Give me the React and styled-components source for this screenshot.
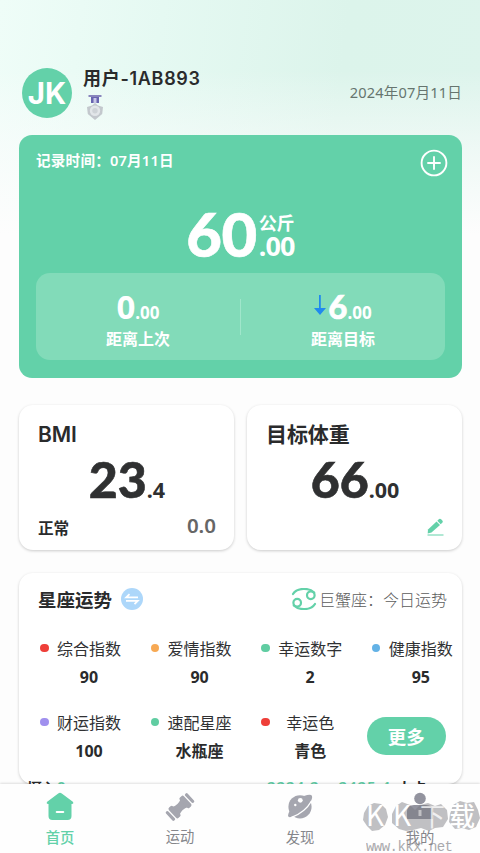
import React from "react";
import styled, { createGlobalStyle } from "styled-components";

const GREEN = "#63d1a9";
const cjk = `"Noto Sans CJK SC", sans-serif`;

const GlobalStyle = createGlobalStyle`
  * { box-sizing: border-box; }
  body { margin: 0; background: #fdfdfd; font-family: "Noto Sans CJK SC", sans-serif; color: #2a2b2c; }
`;

const Phone = styled.div`
  width: 480px;
  height: 853px;
  overflow: hidden;
  position: relative;
  display: flex;
  flex-direction: column;
  background:
    linear-gradient(180deg, rgba(253,253,253,0) 0, rgba(253,253,253,0) 70px, rgba(253,253,253,0.55) 150px, #fdfdfd 235px),
    linear-gradient(97deg, #effdf8 0%, #e5f9f2 28%, #dcf4eb 60%, #ddf4ec 86%, #e6f7f1 100%);
`;

const Content = styled.main`
  height: 784px;
  flex: none;
  overflow: hidden;
  padding: 67px 18px 0 19px;
`;

const Header = styled.header`
  display: flex;
  height: 68px;
  padding-left: 3px;
`;

const Avatar = styled.div`
  width: 50px;
  height: 50px;
  margin-top: 0.5px;
  border-radius: 50%;
  background: ${GREEN};
  color: #fff;
  font: 700 29.5px/51px Inter, sans-serif;
  text-align: center;
`;

const Identity = styled.div`
  flex: 1;
  margin-left: 11px;
`;

const UserName = styled.div`
  font: 600 18px/23px Inter, ${cjk};
  letter-spacing: 0.7px;
  white-space: nowrap;
`;

const Medal = styled.svg`
  display: block;
  width: 18px;
  height: 25px;
  margin: 5px 0 0 3px;
`;

const Today = styled.div`
  font: 400 14.6px/20px "Noto Sans", ${cjk};
  letter-spacing: 0.15px;
  margin-top: 15px;
  color: #66756f;
`;

const WeightCard = styled.section`
  height: 243px;
  border-radius: 13px;
  background: ${GREEN};
  color: #fff;
  padding: 0 17px;
  display: flex;
  flex-direction: column;
`;

const RecordRow = styled.div`
  display: flex;
  justify-content: space-between;
  height: 68px;
`;

const RecordTime = styled.div`
  font: 600 14.6px/20px "Noto Sans", ${cjk};
  letter-spacing: 0.2px;
  margin-top: 15px;
`;

const AddIcon = styled.svg`
  width: 28px;
  height: 28px;
  margin: 14px -3px 0 0;
`;

const Weight = styled.div`
  display: flex;
  justify-content: center;
  height: 70px;
  gap: 2px;
`;

const Digits = styled.span`
  font-family: ${(p) => (p.$heavy ? `"Lato"` : `"Noto Sans"`)}, sans-serif;
  font-weight: ${(p) => (p.$heavy ? 900 : 700)};
  font-size: ${(p) => p.$size}px;
  line-height: ${(p) => p.$line || p.$size}px;
  letter-spacing: ${(p) => p.$track || 0}px;
  -webkit-text-stroke: ${(p) => (p.$heavy ? 0.6 : 0)}px currentColor;
`;

const UnitStack = styled.div`
  display: flex;
  flex-direction: column;
  padding-top: 8px;
`;

const Unit = styled.span`
  font: 600 18px/23px ${cjk};
`;

const Panel = styled.div`
  height: 87px;
  border-radius: 14px;
  background: #82dbb9;
  display: grid;
  grid-template-columns: 1fr 1px 1fr;
  align-items: center;
`;

const PanelDivider = styled.i`
  height: 36px;
  background: #a0e6cb;
`;

const Distance = styled.div`
  height: 87px;
  padding-top: 17px;
  text-align: center;
`;

const DistanceValue = styled.div`
  display: flex;
  justify-content: center;
  align-items: baseline;
  height: 37px;
`;

const DownArrow = styled.svg`
  width: 12px;
  height: 21px;
  margin-right: 2px;
  align-self: flex-start;
  margin-top: 5px;
`;

const DistanceLabel = styled.div`
  font: 600 16px/22px ${cjk};
`;

const CardRow = styled.div`
  display: grid;
  grid-template-columns: 1fr 1fr;
  gap: 13px;
  margin-top: 27px;
`;

const Card = styled.section`
  background: #fff;
  border-radius: 14px;
  box-shadow: 0 1px 3px rgba(0, 0, 0, 0.2);
`;

const StatCard = styled(Card)`
  height: 145px;
  padding: 17px 18px 0 19px;
`;

const StatTitle = styled.div`
  font: 600 21px/25px Inter, ${cjk};
  letter-spacing: -0.1px;
  height: 32px;
`;

const StatValue = styled.div`
  height: 61px;
  display: flex;
  justify-content: center;
  align-items: baseline;
  color: #2f3031;
`;

const StatFoot = styled.div`
  display: flex;
  justify-content: ${(p) => (p.$end ? "flex-end" : "space-between")};
`;

const Status = styled.span`
  font: 600 15.6px/25px ${cjk};
`;

const Delta = styled.span`
  font: 600 20.5px/21px "Noto Sans", sans-serif;
  color: #666;
`;

const EditIcon = styled.svg`
  width: 17px;
  height: 19px;
  margin-top: 3px;
`;

const FortuneCard = styled(Card)`
  height: 211px;
  margin-top: 23px;
  padding: 13px 0 0 19px;
`;

const FortuneHead = styled.div`
  display: flex;
  align-items: center;
  height: 28px;
  padding-right: 15px;
`;

const FortuneTitle = styled.div`
  font: 600 18.5px/26px ${cjk};
  flex: none;
  margin-top: -2px;
`;

const SwapIcon = styled.svg`
  width: 22px;
  height: 22px;
  margin: -2px auto 0 9px;
`;

const CancerIcon = styled.svg`
  width: 26px;
  height: 22px;
  margin: -3px 2px 0 0;
`;

const SignText = styled.span`
  font: 300 16px/26px ${cjk};
  color: #5c5c5c;
  margin-top: -2px;
`;

const FortuneGrid = styled.div`
  display: grid;
  grid-template-columns: repeat(4, 110.6px);
  grid-auto-rows: 74px;
  margin-top: 22px;
`;

const FortuneItem = styled.div`
  display: grid;
  grid-template-columns: 19px 64px;
  grid-template-rows: 24px 33px;
  align-items: center;
`;

const Dot = styled.i`
  width: 8.5px;
  height: 8.5px;
  margin-left: 2px;
  border-radius: 50%;
  background: ${(p) => p.$color};
`;

const FortuneLabel = styled.span`
  font: 400 16px/24px ${cjk};
  text-align: center;
  color: #303133;
`;

const FortuneValue = styled.span`
  grid-column: 2;
  text-align: center;
  font: 700 16px/24px "Noto Sans", ${cjk};
`;

const MoreButton = styled.button`
  border: 0;
  width: 79px;
  height: 38px;
  margin: 7px 0 0 -3px;
  border-radius: 19px;
  background: ${GREEN};
  color: #fff;
  padding: 0;
  font: 700 18.5px/36px ${cjk};
`;

const NextSection = styled.div`
  margin-top: -8px;
  padding-left: 8px;
  display: grid;
  grid-template-columns: 240px 1fr;
  font: 600 15px/20px "Noto Sans", ${cjk};
  white-space: nowrap;
  position: relative;
`;

const NextText = styled.span`
  display: flex;
  align-items: flex-start;
`;

const Accent = styled.span`
  color: ${GREEN};
  letter-spacing: 0.9px;
`;

const NextUnit = styled.span`
  padding: 2px 0 0 ${(p) => p.$gap || 0}px;
`;

const TabBar = styled.nav`
  height: 69px;
  flex: none;
  display: grid;
  grid-template-columns: repeat(4, 1fr);
  background: #fefefe;
  box-shadow: 0 -1px 2px rgba(0, 0, 0, 0.12);
  position: relative;
`;

const Tab = styled.div`
  display: flex;
  flex-direction: column;
  align-items: center;
  padding-top: 8px;
  color: ${(p) => (p.$active ? GREEN : "#85868b")};
  font: ${(p) => (p.$active ? 500 : 400)} 14.3px/20px ${cjk};
`;

const TabIcon = styled.svg`
  width: 30px;
  height: 30px;
  margin-bottom: ${(p) => p.$gap}px;
`;

const Watermark = styled.svg`
  position: absolute;
  right: 0;
  bottom: 0;
  width: 120px;
  height: 56px;
`;

const fortunes = [
  ["综合指数", "90", "#ee3f39"],
  ["爱情指数", "90", "#f7a954"],
  ["幸运数字", "2", "#60cda2"],
  ["健康指数", "95", "#63b2e6"],
  ["财运指数", "100", "#a090ee"],
  ["速配星座", "水瓶座", "#60cda2"],
  ["幸运色", "青色", "#ee3f39"],
];

export default function App() {
  return (
    <Phone>
      <GlobalStyle />
      <Content>
        <Header>
          <Avatar>JK</Avatar>
          <Identity>
            <UserName>用户-1AB893</UserName>
            <Medal viewBox="0 0 18 25">
              <path d="M2.5 0h13v2h-13z" fill="#8986bd" />
              <path d="M5 2h8v6H5z" fill="#6965b0" />
              <path d="M7.5 3h3v5h-3z" fill="#c9c8e8" />
              <path d="m9 8 3 2.5 5 1.5-.8 7L9 25l-7.2-6L1 12l5-1.5z" fill="#c3c8cd" />
              <circle cx="9" cy="15.8" r="5.2" fill="#e2e6e9" />
              <circle cx="9" cy="15.8" r="2.7" fill="#ced3d7" />
            </Medal>
          </Identity>
          <Today>2024年07月11日</Today>
        </Header>

        <WeightCard>
          <RecordRow>
            <RecordTime>记录时间：07月11日</RecordTime>
            <AddIcon viewBox="0 0 28 28" fill="none" stroke="#fff" strokeWidth="1.9">
              <circle cx="14" cy="14" r="12.4" />
              <path d="M14 7.3v13.4M7.3 14h13.4" />
            </AddIcon>
          </RecordRow>
          <Weight>
            <Digits $heavy $size={61.5} $line={61} $track={-0.5}>60</Digits>
            <UnitStack>
              <Unit>公斤</Unit>
              <Digits $size={27} $line={24} $track={-0.8}>.00</Digits>
            </UnitStack>
          </Weight>
          <Panel>
            <Distance>
              <DistanceValue>
                <Digits $size={33}>0</Digits>
                <Digits $size={17}>.00</Digits>
              </DistanceValue>
              <DistanceLabel>距离上次</DistanceLabel>
            </Distance>
            <PanelDivider />
            <Distance>
              <DistanceValue>
                <DownArrow viewBox="0 0 12 21">
                  <path d="M5 0h1.8v13H12l-6 7-6-7h5z" fill="#2089ee" />
                </DownArrow>
                <Digits $heavy $size={33}>6</Digits>
                <Digits $size={17}>.00</Digits>
              </DistanceValue>
              <DistanceLabel>距离目标</DistanceLabel>
            </Distance>
          </Panel>
        </WeightCard>

        <CardRow>
          <StatCard>
            <StatTitle>BMI</StatTitle>
            <StatValue>
              <Digits $heavy $size={50}>23</Digits>
              <Digits $size={21.5}>.4</Digits>
            </StatValue>
            <StatFoot>
              <Status>正常</Status>
              <Delta>0.0</Delta>
            </StatFoot>
          </StatCard>
          <StatCard>
            <StatTitle>目标体重</StatTitle>
            <StatValue>
              <Digits $heavy $size={50}>66</Digits>
              <Digits $size={21.5}>.00</Digits>
            </StatValue>
            <StatFoot $end>
              <EditIcon viewBox="0 0 17 19">
                <path d="m1 11.5 8.5-8 3.5 3.5-8.5 7.5L.7 15.6z" fill={GREEN} />
                <path d="m10.3 2.7 1.8-1.6q1-.8 2 .2l1.4 1.5q.8 1-.2 2l-1.6 1.5z" fill={GREEN} />
                <path d="M.5 17h16" stroke={GREEN} />
              </EditIcon>
            </StatFoot>
          </StatCard>
        </CardRow>

        <FortuneCard>
          <FortuneHead>
            <FortuneTitle>星座运势</FortuneTitle>
            <SwapIcon viewBox="0 0 22 22">
              <circle cx="11" cy="11" r="11" fill="#add7fa" />
              <path d="M17 9.3H5.3L8.5 6.2M5 12.9h11.7l-3.2 3.2" fill="none" stroke="#fff" strokeWidth="1.8" />
            </SwapIcon>
            <CancerIcon viewBox="0 0 26 22" fill="none" stroke={GREEN} strokeWidth="2.2" strokeLinecap="round">
              <path d="M2 6C6 -.5 18-.5 23.2 4.5M24 16C20 22.5 8 22.5 2.8 17.5" />
              <circle cx="19.8" cy="7.3" r="3.8" />
              <circle cx="6.2" cy="14.7" r="3.8" />
            </CancerIcon>
            <SignText>巨蟹座：今日运势</SignText>
          </FortuneHead>
          <FortuneGrid>
            {fortunes.map(([label, value, color]) => (
              <FortuneItem key={label}>
                <Dot $color={color} />
                <FortuneLabel>{label}</FortuneLabel>
                <FortuneValue>{value}</FortuneValue>
              </FortuneItem>
            ))}
            <MoreButton>更多</MoreButton>
          </FortuneGrid>
        </FortuneCard>

        <NextSection>
          <NextText>
            <NextUnit>摄入</NextUnit>
            <Accent>0</Accent>
          </NextText>
          <NextText>
            <Accent>2224.2 ~ 2425.4</Accent>
            <NextUnit $gap={6}>大卡</NextUnit>
          </NextText>
        </NextSection>
      </Content>

      <TabBar>
        <Tab $active>
          <TabIcon viewBox="0 0 30 30" $gap={5}>
            <path d="M13.2 1.4q1.8-1.2 3.6 0l11 8.3q1.5 2-1 2.3h-.3V24q0 4-4 4h-15q-4 0-4-4V12h-.3q-2.5-.3-1-2.3z" fill={GREEN} />
            <path d="M11.8 20h6.4" stroke="#fff" strokeWidth="2.2" strokeLinecap="round" />
          </TabIcon>
          首页
        </Tab>
        <Tab>
          <TabIcon viewBox="0 0 30 30" $gap={4}>
            <g fill="#a5a6af" transform="rotate(-43 15 15)">
              <path d="M9 9.5q6 3 12 0v11q-6-3-12 0z" />
              <rect x="4.8" y="8" width="5.5" height="14" rx="1.8" />
              <rect x="19.7" y="8" width="5.5" height="14" rx="1.8" />
              <rect x="0.3" y="9" width="3.2" height="12" rx="1.3" />
              <rect x="26.5" y="9" width="3.2" height="12" rx="1.3" />
            </g>
          </TabIcon>
          运动
        </Tab>
        <Tab>
          <TabIcon viewBox="0 0 30 30" $gap={5}>
            <circle cx="15" cy="14.8" r="11.6" fill="#a5a6af" />
            <path d="M19 4q7-2.5 8 0 1 3-4 9-7 8-14 11-6 2.5-6-.5 0-2 2-5z" fill="#a5a6af" />
            <path d="M26.5 9C22 17 14.5 22.5 6.5 25.3" fill="none" stroke="#fff" strokeWidth="1.4" />
            <circle cx="15.3" cy="8.3" r="2.4" fill="#fff" />
            <circle cx="10.3" cy="13" r="1.2" fill="#fff" />
          </TabIcon>
          发现
        </Tab>
        <Tab>
          <TabIcon viewBox="0 0 30 30" $gap={5}>
            <circle cx="15" cy="6.5" r="5.8" fill="#92939e" />
            <path d="M2 27V19q0-6 7-6h12q7 0 7 6v8z" fill="#92939e" />
            <path d="M13.5 18h3v6h-3z" fill="#fff" />
          </TabIcon>
          我的
        </Tab>
        <Watermark viewBox="0 0 120 56">
          <g fill="#77777d" opacity="0.45">
            <path d="m8 9 6-3 7 1 5 5 2 8-3 8-6 5-7 1-5-5-4-6 1-7z" />
            <path d="m36 9 6-4 8 3 5 5 5-5 8-2 7 3 6-2 6 6 1 9-5 8-8 1-6 3-8-3-8 2-7 1-7-2-7-6 0-9z" />
            <path d="m93 8 7-4 7 2 7-1 4 8 2 8-4 9-7 3-7-2-7 1-6-7 1-8z" />
          </g>
          <g fill="#fff" fontFamily="Noto Sans CJK SC, sans-serif">
            <text x="6" y="29" fontSize="28" fontWeight="400">K</text>
            <text x="33" y="29" fontSize="28" fontWeight="400">K</text>
            <text x="60" y="29" fontSize="25" opacity="0.75">下</text>
            <text x="89" y="29" fontSize="26" fontWeight="500">载</text>
          </g>
          <text x="6" y="54" fill="#8d8d91" opacity="0.75" fontFamily="Liberation Mono, monospace" fontSize="14" textLength="87">www.kkx.net</text>
        </Watermark>
      </TabBar>
    </Phone>
  );
}
